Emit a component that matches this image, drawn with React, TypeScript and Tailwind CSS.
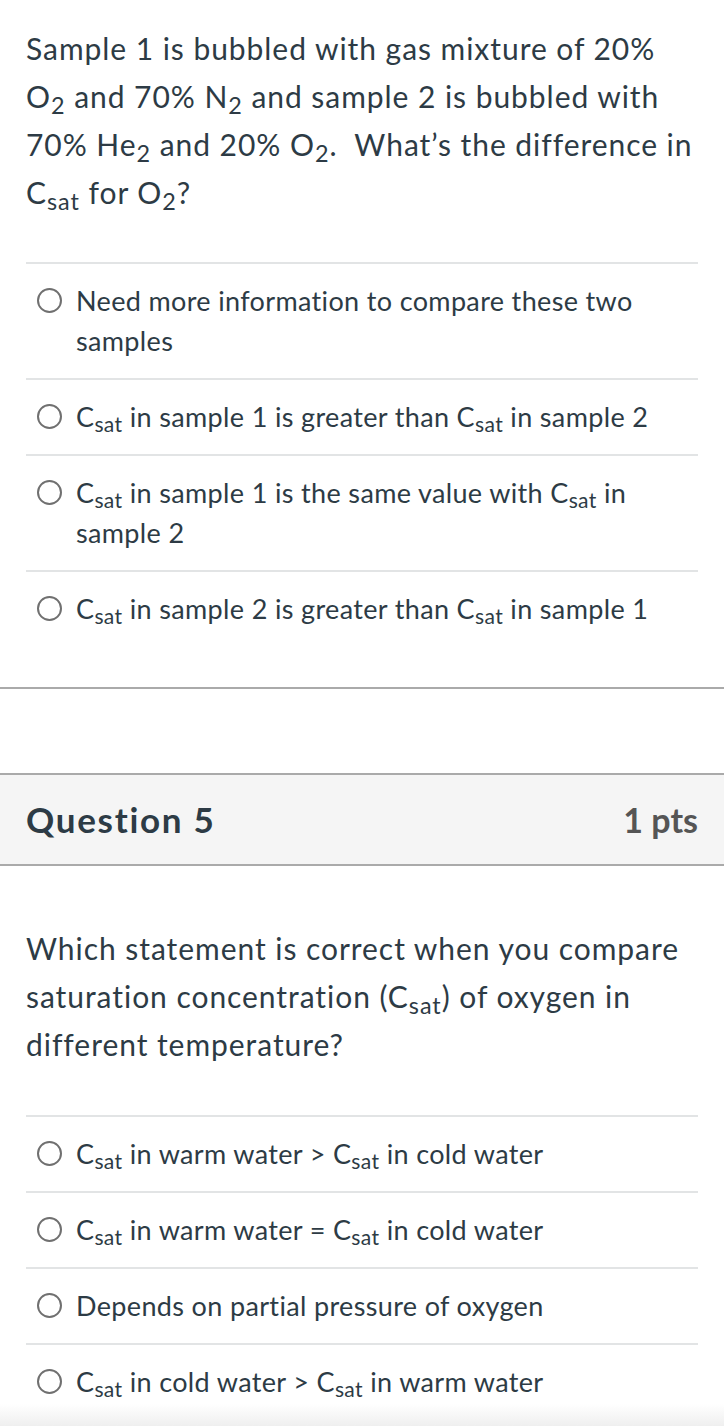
import React from 'react';

const Sub = ({ children }: { children: React.ReactNode }) => (
  <sub className="text-[0.78em]">{children}</sub>
);

const Csat = () => (
  <>
    C<Sub>sat</Sub>
  </>
);

function Radio() {
  return (
    <span className="mt-[7px] block h-[25px] w-[25px] flex-shrink-0 rounded-full border-2 border-[#707070] bg-white" />
  );
}

function Answer({ children }: { children: React.ReactNode }) {
  return (
    <div className="flex gap-[14px] border-t-2 border-[#e2e4e5] py-[17px] pl-[11px]">
      <Radio />
      <div className="text-[27px] leading-[40px] tracking-[0.35px]">{children}</div>
    </div>
  );
}

export default function App() {
  return (
    <div
      className="relative min-h-[1426px] bg-white text-[#2d3b45]"
      style={{ fontFamily: 'Lato, "Open Sans", sans-serif' }}
    >
      <section className="px-[26px] pt-[24px]">
        <p className="text-[30px] leading-[48px] tracking-[0.95px]">
          Sample 1 is bubbled with gas mixture of 20% O<Sub>2</Sub> and 70% N<Sub>2</Sub> and sample 2 is bubbled with 70% He
          <Sub>2</Sub> and 20% O<Sub>2</Sub>.&nbsp; What’s the difference in <Csat /> for O<Sub>2</Sub>?
        </p>
        <div className="mt-[46px] pb-[41px]">
          <Answer>Need more information to compare these two samples</Answer>
          <Answer>
            <Csat /> in sample 1 is greater than <Csat /> in sample 2
          </Answer>
          <Answer>
            <Csat /> in sample 1 is the same value with <Csat /> in sample 2
          </Answer>
          <Answer>
            <Csat /> in sample 2 is greater than <Csat /> in sample 1
          </Answer>
        </div>
      </section>

      <div className="h-[86px] border-t-2 border-[#aaaaaa]" />

      <div className="flex h-[93px] items-center justify-between border-y-2 border-[#aaaaaa] bg-[#f5f5f5] px-[26px]">
        <h2 className="text-[35px] font-bold tracking-[1.7px]">Question 5</h2>
        <span className="text-[34px] font-bold text-[#555555]">1 pts</span>
      </div>

      <section className="px-[26px] pt-[58px]">
        <p className="text-[30px] leading-[48px] tracking-[0.95px]">
          Which statement is correct when you compare saturation concentration (<Csat />) of oxygen in different temperature?
        </p>
        <div className="mt-[47px]">
          <Answer>
            <Csat /> in warm water &gt; <Csat /> in cold water
          </Answer>
          <Answer>
            <Csat /> in warm water = <Csat /> in cold water
          </Answer>
          <Answer>Depends on partial pressure of oxygen</Answer>
          <Answer>
            <Csat /> in cold water &gt; <Csat /> in warm water
          </Answer>
        </div>
      </section>

      <div className="pointer-events-none absolute bottom-0 left-0 right-0 h-[22px] bg-gradient-to-b from-white to-[#efefef]" />
    </div>
  );
}
